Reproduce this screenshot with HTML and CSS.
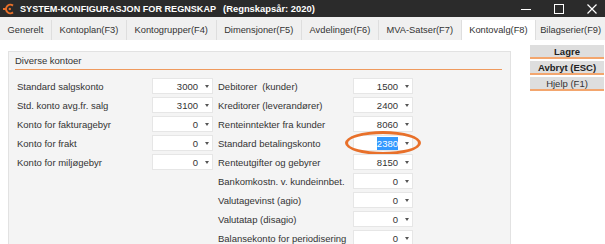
FILE: index.html
```html
<!DOCTYPE html>
<html lang="no">

<head>
    <meta charset="UTF-8">
    <title>System-konfigurasjon</title>
    <link rel="stylesheet" href="styles.css">
</head>

<body>
    <div class="window">
        <!-- Title bar -->
        <div class="titlebar">
            <svg class="app-icon" width="12" height="12" viewBox="0 0 12 12">
                <path d="M10 2.6 A4.3 4.3 0 1 0 10 9.4" fill="none" stroke="#e8702a" stroke-width="2" />
                <rect x="0" y="5" width="3" height="2" fill="#e8702a" />
                <circle cx="6.8" cy="6" r="1.2" fill="#e8702a" />
            </svg>
            <span class="title">SYSTEM-KONFIGURASJON FOR REGNSKAP</span>
            <span class="title year">(Regnskapsår: 2020)</span>
            <div class="controls">
                <svg width="10" height="10" viewBox="0 0 10 10"><path d="M0 5.5 H10" stroke="#fff" stroke-width="1" /></svg>
                <svg width="10" height="10" viewBox="0 0 10 10"><rect x="0.5" y="0.5" width="9" height="9" fill="none" stroke="#fff" stroke-width="1" /></svg>
                <svg width="10" height="10" viewBox="0 0 10 10"><path d="M0.5 0.5 L9.5 9.5 M9.5 0.5 L0.5 9.5" stroke="#fff" stroke-width="1.2" /></svg>
            </div>
        </div>

        <!-- Tabs -->
        <div class="tabs">
            <div class="tab">Generelt</div>
            <div class="tab">Kontoplan(F3)</div>
            <div class="tab">Kontogrupper(F4)</div>
            <div class="tab">Dimensjoner(F5)</div>
            <div class="tab">Avdelinger(F6)</div>
            <div class="tab">MVA-Satser(F7)</div>
            <div class="tab active">Kontovalg(F8)</div>
            <div class="tab">Bilagserier(F9)</div>
        </div>

        <div class="main">
            <div class="group">
                <div class="group-head">Diverse kontoer</div>
                <div class="group-body">
                    <div class="col">
                        <div class="row"><span class="label">Standard salgskonto</span><div class="combo"><span class="val">3000</span><span class="arrow"></span></div></div>
                        <div class="row"><span class="label">Std. konto avg.fr. salg</span><div class="combo"><span class="val">3100</span><span class="arrow"></span></div></div>
                        <div class="row"><span class="label">Konto for fakturagebyr</span><div class="combo"><span class="val">0</span><span class="arrow"></span></div></div>
                        <div class="row"><span class="label">Konto for frakt</span><div class="combo"><span class="val">0</span><span class="arrow"></span></div></div>
                        <div class="row"><span class="label">Konto for miljøgebyr</span><div class="combo"><span class="val">0</span><span class="arrow"></span></div></div>
                    </div>
                    <div class="col">
                        <div class="row"><span class="label">Debitorer&nbsp; (kunder)</span><div class="combo"><span class="val">1500</span><span class="arrow"></span></div></div>
                        <div class="row"><span class="label">Kreditorer (leverandører)</span><div class="combo"><span class="val">2400</span><span class="arrow"></span></div></div>
                        <div class="row"><span class="label">Renteinntekter fra kunder</span><div class="combo"><span class="val">8060</span><span class="arrow"></span></div></div>
                        <div class="row"><span class="label">Standard betalingskonto</span><div class="combo"><span class="val"><span class="sel">2380</span></span><span class="arrow"></span></div><span class="ring"></span></div>
                        <div class="row"><span class="label">Renteutgifter og gebyrer</span><div class="combo"><span class="val">8150</span><span class="arrow"></span></div></div>
                        <div class="row"><span class="label">Bankomkostn. v. kundeinnbet.</span><div class="combo"><span class="val">0</span><span class="arrow"></span></div></div>
                        <div class="row"><span class="label">Valutagevinst (agio)</span><div class="combo"><span class="val">0</span><span class="arrow"></span></div></div>
                        <div class="row"><span class="label">Valutatap (disagio)</span><div class="combo"><span class="val">0</span><span class="arrow"></span></div></div>
                        <div class="row"><span class="label">Balansekonto for periodisering</span><div class="combo"><span class="val">0</span><span class="arrow"></span></div></div>
                    </div>
                </div>
            </div>

            <div class="actions">
                <button class="btn">Lagre</button>
                <button class="btn">Avbryt (ESC)</button>
                <button class="btn light">Hjelp (F1)</button>
            </div>
        </div>
    </div>
</body>

</html>
```

FILE: styles.css
```css
* {
    margin: 0;
    padding: 0;
    box-sizing: border-box;
}

body {
    font-family: "Liberation Sans", Arial, sans-serif;
    font-size: 9.5px;
    color: #333;
    background-color: #fff;
    overflow: hidden;
}

.window {
    width: 605px;
    height: 244px;
}

/* title bar */
.titlebar {
    height: 17px;
    background-color: #2b2b2b;
    display: flex;
    align-items: center;
    padding-left: 3px;
    color: #fff;
}

.app-icon {
    margin-right: 5px;
}

.title {
    font-weight: bold;
    font-size: 9.1px;
}

.year {
    font-size: 9.4px;
    margin-left: 7px;
}

.controls {
    margin-left: auto;
    display: flex;
    gap: 23px;
    padding-right: 8px;
}

/* tabs */
.tabs {
    height: 23px;
    display: flex;
    background-color: #f0f0f0;
    padding-top: 3px;
}

.tab {
    flex-shrink: 0;
    padding: 0 7.6px;
    display: flex;
    align-items: center;
    justify-content: center;
    border-right: 1px solid #dedede;
    color: #333;
    font-size: 9.3px;
    white-space: nowrap;
}

.tab.active {
    background-color: #fff;
}

.tab:last-child {
    flex: 1 1 0;
    min-width: 0;
    padding: 0;
    border-right: none;
}

/* main area */
.main {
    display: flex;
    padding-left: 8px;
    padding-top: 5px;
}

.group {
    width: 503px;
    height: 200px;
    margin-top: 6px;
    background-color: #f4f4f4;
    border: 1px solid #e2e2e2;
    padding: 0 0 0 8px;
}

.group-head {
    height: 18px;
    line-height: 18px;
    margin-left: -2px;
    margin-right: 8px;
    border-bottom: 1px solid #ef9a5e;
}

.group-body {
    display: flex;
    gap: 5px;
    padding-top: 8px;
}

.col {
    display: flex;
    flex-direction: column;
    gap: 3px;
}

.row {
    display: flex;
    align-items: center;
    height: 16px;
    position: relative;
}

.label {
    width: 135px;
    white-space: nowrap;
}

.combo {
    width: 61px;
    height: 16px;
    background-color: #fff;
    border: 1px solid #e6e6e6;
    display: flex;
    align-items: center;
    justify-content: flex-end;
    padding-right: 3px;
}

.col + .col .combo {
    width: 60px;
}

.val {
    padding-right: 7px;
}

.sel {
    background-color: #3399ff;
    color: #fff;
    padding: 1px 0;
}

.arrow {
    width: 0;
    height: 0;
    border-left: 2.5px solid transparent;
    border-right: 2.5px solid transparent;
    border-top: 3px solid #555;
}

/* orange annotation ring */
.ring {
    position: absolute;
    left: 127px;
    top: -4px;
    width: 76px;
    height: 24px;
    border: 3px solid #e8702a;
    border-radius: 50%;
    pointer-events: none;
}

/* buttons */
.actions {
    margin-left: 19px;
    width: 74px;
    display: flex;
    flex-direction: column;
    gap: 2px;
}

.btn {
    height: 14px;
    background-color: #dedede;
    border: none;
    border-bottom: 2px solid #f3a66e;
    font-family: "Liberation Sans", Arial, sans-serif;
    font-size: 9.5px;
    font-weight: bold;
    color: #222;
    cursor: pointer;
}

.btn.light {
    font-weight: normal;
    color: #333;
}
```
